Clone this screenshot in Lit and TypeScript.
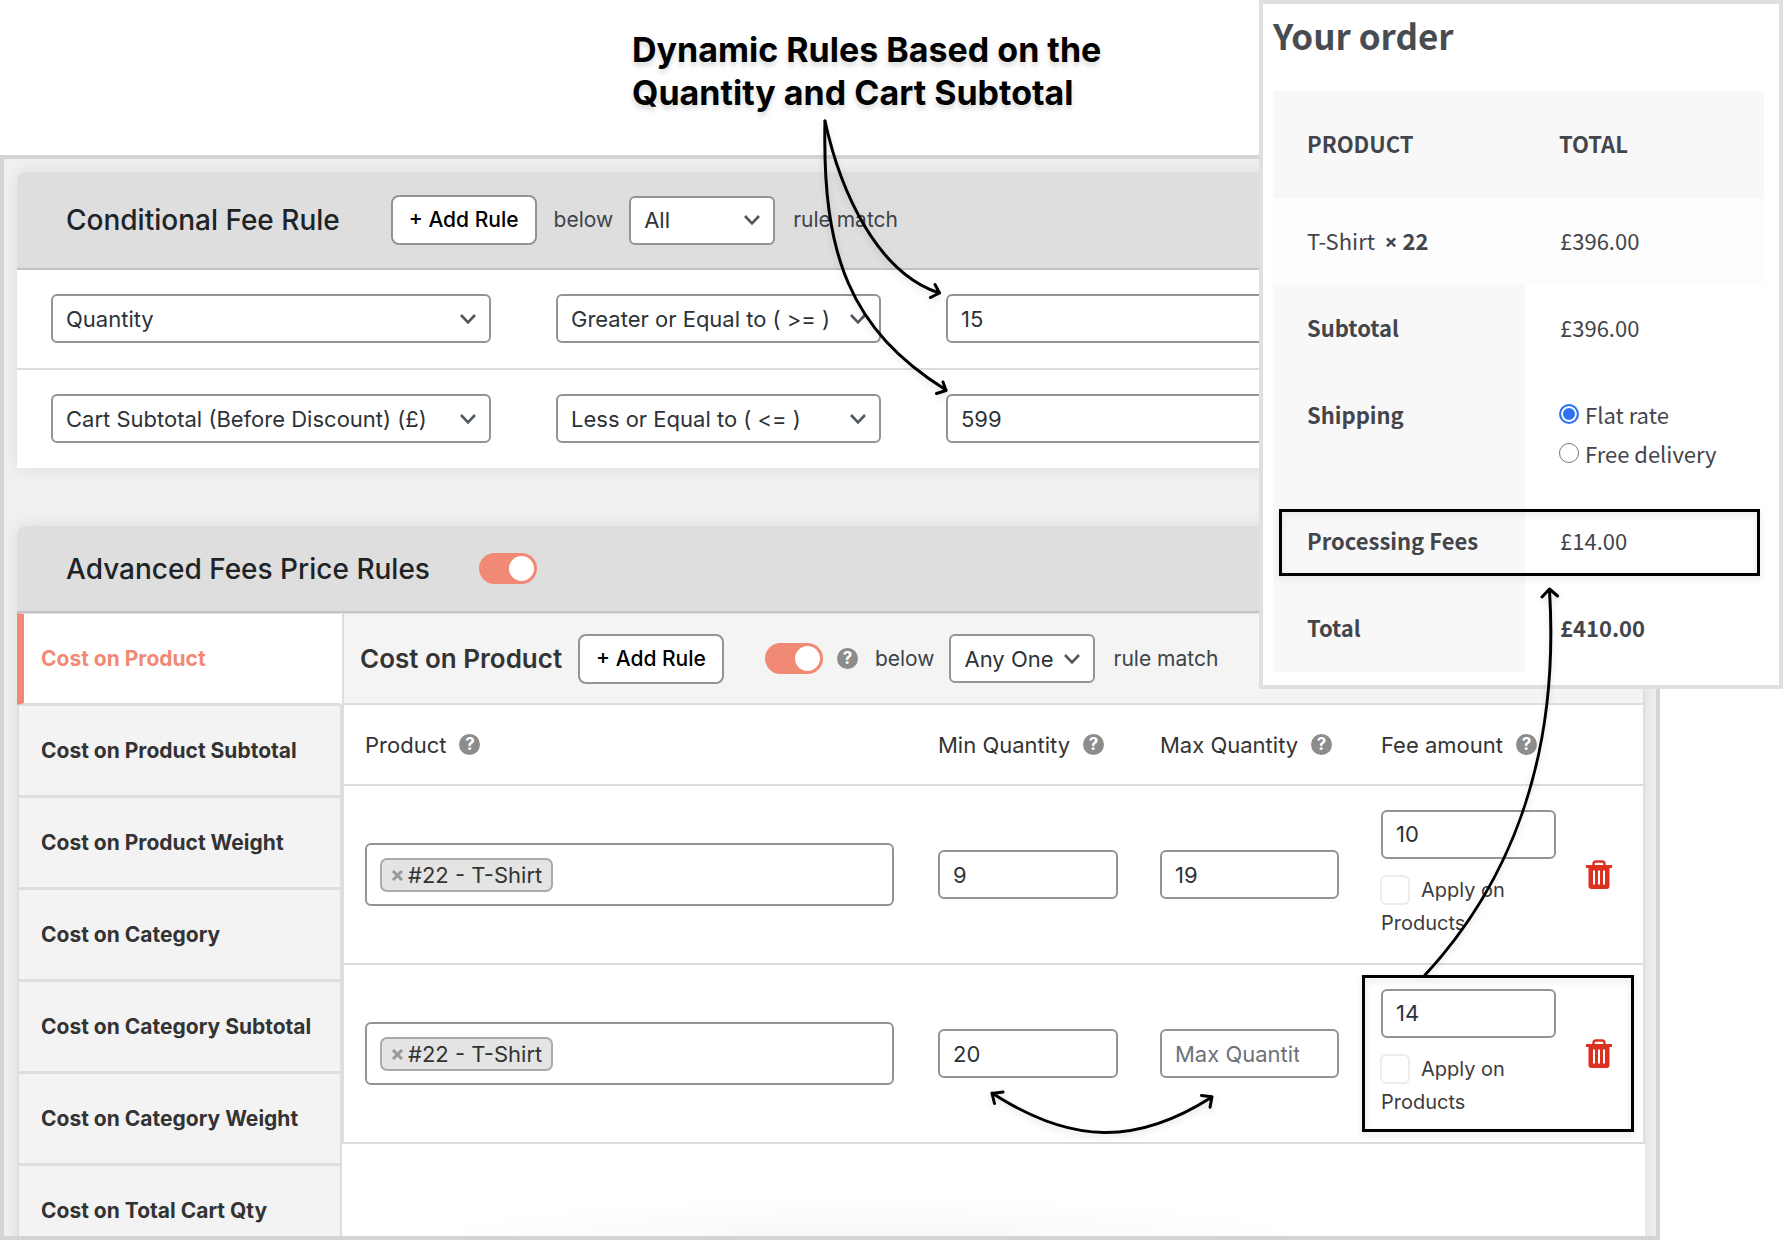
import { LitElement, html, css, svg } from "lit";
import { customElement, property } from "lit/decorators.js";

const chevron = svg`<svg class="chevron" viewBox="0 0 18 12" width="18" height="12" aria-hidden="true"><path d="M2 2l7 7.4L16 2" fill="none" stroke="#50575e" stroke-width="2.6"/></svg>`;

const controls = css`
  *, *::before, *::after { box-sizing: border-box; }
  .select { position: relative; display: inline-flex; align-items: center; }
  .select select { width: 100%; }
  .chevron { position: absolute; right: 14px; pointer-events: none; }
  select, input.field {
    appearance: none; height: 49px; margin: 0; padding: 0 13px; border: 2px solid #929499; border-radius: 6px;
    background: #fff; color: #2c3338; font: 400 22px/30px Inter, "Liberation Sans", sans-serif;
  }
  input.field { width: 100%; }
  input.field::placeholder { color: #6c7177; opacity: 1; }
  .add {
    height: 50px; padding: 0 16px; border: 2px solid #929499; border-radius: 8px; background: #fff; color: #000;
    font: 500 21px/28px Inter, "Liberation Sans", sans-serif; white-space: nowrap;
  }
  .hint { font-size: 21px; line-height: 28px; color: #3c434a; white-space: nowrap; }
  .help {
    display: inline-flex; align-items: center; justify-content: center; width: 21px; height: 21px; border-radius: 50%;
    background: #8c8c8c; color: #fff; font: 700 17px/21px Inter, "Liberation Sans", sans-serif; flex: none;
  }
  .toggle { display: inline-flex; flex: none; }
  .toggle input {
    appearance: none; margin: 0; width: 58px; height: 31px; border-radius: 16px; background: #f08a74;
    display: flex; align-items: center; justify-content: flex-end; padding: 0 3px;
  }
  .toggle input::before { content: ""; width: 25px; height: 25px; border-radius: 50%; background: #fff; }
`;

const pick = (name: string, value: string, cls = "") => html`
  <span class="select ${cls}">
    <select aria-label=${name}><option>${value}</option></select>${chevron}
  </span>`;

const toggle = (name: string) => html`
  <label class="toggle"><input type="checkbox" role="switch" aria-label=${name} checked /></label>`;

const help = html`<span class="help">?</span>`;

@customElement("condition-card")
class ConditionCard extends LitElement {
  static styles = [controls, css`
    :host { display: block; background: #fff; border-radius: 8px 8px 0 0; box-shadow: 0 0 18px rgba(0, 0, 0, 0.08); }
    .head {
      display: flex; align-items: center; height: 98px; padding: 0 49px; border-bottom: 2px solid #c0c1c4;
      border-radius: 8px 8px 0 0; background: #dedede;
    }
    h2 { margin: 0 51px 0 0; font-size: 28px; line-height: 36px; font-weight: 500; color: #1d2327; white-space: nowrap; }
    .head .select { width: 146px; margin: 0 18px 0 16px; }
    .add { margin-right: 17px; }
    .row {
      display: grid; grid-template-columns: 440px 325px 1fr; column-gap: 65px; padding: 24px 34px 25px;
      border-bottom: 2px solid #dcdcde;
    }
    .row:last-child { border-bottom: 0; }
  `];

  @property({ attribute: false }) rules = [
    { field: "Quantity", op: "Greater or Equal to ( >= )", value: "15" },
    { field: "Cart Subtotal (Before Discount) (£)", op: "Less or Equal to ( <= )", value: "599" },
  ];

  render() {
    return html`
      <header class="head">
        <h2>Conditional Fee Rule</h2>
        <button class="add" type="button">+ Add Rule</button>
        <span class="hint">below</span>
        ${pick("Rule match mode", "All")}
        <span class="hint">rule match</span>
      </header>
      ${this.rules.map((r) => html`
        <div class="row">
          ${pick("Condition", r.field)}
          ${pick("Operator", r.op)}
          <input class="field" type="text" aria-label="Value" .value=${r.value} />
        </div>`)}
    `;
  }
}

@customElement("price-rules-card")
class PriceRulesCard extends LitElement {
  static styles = [controls, css`
    :host { display: block; background: #fff; border-radius: 8px 8px 0 0; box-shadow: 0 0 18px rgba(0, 0, 0, 0.08); }
    .head {
      display: flex; align-items: center; height: 87px; padding: 0 49px; border-bottom: 2px solid #c3c4c7;
      border-radius: 8px 8px 0 0; background: #dedede;
    }
    h2 { margin: 0 49px 0 0; font-size: 28px; line-height: 36px; font-weight: 500; color: #1d2327; white-space: nowrap; }
    .body { display: grid; grid-template-columns: 325px 1fr; align-items: start; }
    .tab {
      display: flex; align-items: center; height: 92px; padding-left: 22px; border: 2px solid #dedede; border-top-width: 1px;
      background: #f3f3f3; color: #333; font-size: 21px; line-height: 28px; font-weight: 700; text-decoration: none; white-space: nowrap;
    }
    .tab.on { padding-left: 17px; border-left: 7px solid #f08a74; border-right-color: #fff; background: #fff; color: #f08a74; }
    .bar {
      display: flex; align-items: center; height: 92px; padding-left: 16px; background: #f4f4f4;
      border: 2px solid #dedede; border-top-width: 1px;
    }
    h3 { margin: 0 16px 0 0; font-size: 26px; line-height: 32px; font-weight: 600; color: #333; white-space: nowrap; }
    .bar .add { margin-right: 41px; }
    .bar .help { margin: 0 17px 0 14px; }
    .bar .select { width: 146px; margin: 0 18px 0 15px; }
    table { width: 100%; border-collapse: separate; border-spacing: 0; table-layout: fixed; border-left: 2px solid #dedede; border-right: 2px solid #dedede; }
    .c-min { width: 222px; } .c-max { width: 221px; } .c-fee { width: 217px; } .c-del { width: 66px; }
    th, td { padding: 0 21px; border-bottom: 2px solid #dcdcdc; text-align: left; vertical-align: middle; }
    td:first-child { padding-right: 23px; }
    th { height: 81px; font-size: 22px; line-height: 30px; font-weight: 400; color: #333; }
    th div { display: flex; align-items: center; gap: 13px; white-space: nowrap; }
    td { height: 179px; }
    td:last-child, th:last-child { padding: 0 9px; }
    td .field { padding-right: 38px; }
    .picker { display: flex; align-items: center; height: 63px; padding: 0 13px; border: 2px solid #929499; border-radius: 6px; }
    .tag {
      display: flex; align-items: center; gap: 4px; height: 34px; padding: 0 9px; border: 2px solid #aaa; border-radius: 7px;
      background: #e4e4e4; color: #333; font-size: 22px; line-height: 30px; white-space: nowrap;
    }
    .x { padding: 2px 0 0; border: 0; background: none; display: flex; }
    .apply { display: block; margin-top: 16px; font-size: 20px; line-height: 31px; color: #3c3c3c; }
    .apply input { appearance: none; width: 30px; height: 30px; margin: 0 11px 3px -1px; border: 2px solid #ececec; border-radius: 6px; background: #fff; vertical-align: middle; }
    .trash { display: block; padding: 0; border: 0; background: none; }
    .trash svg { display: block; }
  `];

  tabs = ["Cost on Product", "Cost on Product Subtotal", "Cost on Product Weight", "Cost on Category",
    "Cost on Category Subtotal", "Cost on Category Weight", "Cost on Total Cart Qty"];

  rows = [
    { product: "#22 - T-Shirt", min: "9", max: "19", fee: "10" },
    { product: "#22 - T-Shirt", min: "20", max: "", fee: "14" },
  ];

  render() {
    return html`
      <header class="head"><h2>Advanced Fees Price Rules</h2>${toggle("Enable advanced price rules")}</header>
      <div class="body">
        <nav>${this.tabs.map((t, i) => html`<a class="tab ${i === 0 ? "on" : ""}" href="#">${t}</a>`)}</nav>
        <section>
          <div class="bar">
            <h3>Cost on Product</h3>
            <button class="add" type="button">+ Add Rule</button>
            ${toggle("Enable cost on product")}${help}
            <span class="hint">below</span>
            ${pick("Rule match mode", "Any One")}
            <span class="hint">rule match</span>
          </div>
          <table>
            <colgroup><col /><col class="c-min" /><col class="c-max" /><col class="c-fee" /><col class="c-del" /></colgroup>
            <thead><tr>
              ${["Product", "Min Quantity", "Max Quantity", "Fee amount"].map((h) => html`<th scope="col"><div>${h}${help}</div></th>`)}
              <th></th>
            </tr></thead>
            <tbody>${this.rows.map((r) => html`<tr>
              <td><div class="picker"><span class="tag">
                <button class="x" type="button" aria-label="Remove">
                  <svg width="13" height="13" viewBox="0 0 13 13"><path d="M2 2l9 9M11 2l-9 9" stroke="#999" stroke-width="3"/></svg>
                </button>${r.product}</span></div></td>
              <td><input class="field" type="text" aria-label="Min Quantity" placeholder="Min Quantity" .value=${r.min} /></td>
              <td><input class="field" type="text" aria-label="Max Quantity" placeholder="Max Quantity" .value=${r.max} /></td>
              <td><input class="field" type="text" aria-label="Fee amount" .value=${r.fee} />
                <label class="apply"><input type="checkbox" />Apply on Products</label></td>
              <td><button class="trash" type="button" aria-label="Delete rule">
                <svg width="26" height="29" viewBox="0 0 26 29">
                  <path d="M0 5h26v3H0z" fill="#dc3020"/>
                  <path d="M7.5 5.5V4q0-2.5 2.5-2.5h6q2.500 0 2.500 2.500v1.500" fill="none" stroke="#dc3020" stroke-width="2.400"/>
                  <path d="M2.500 7h21v19q0 3-3 3h-15q-3 0-3-3z" fill="#dc3020"/>
                  <path d="M8 10.500v14M13 10.500v14M18 10.500v14" stroke="#fff" stroke-width="2"/>
                </svg></button></td>
            </tr>`)}</tbody>
          </table>
        </section>
      </div>
    `;
  }
}

@customElement("order-card")
class OrderCard extends LitElement {
  static styles = css`
    * { box-sizing: border-box; }
    :host {
      display: block; box-sizing: border-box; padding: 6px 15px 13px 10px; border: 4px solid #e0e0e0; background: #fff;
      font-family: "Noto Sans CJK SC", "Open Sans", sans-serif; color: #43454b;
    }
    h1 { margin: 0 0 31px; font-size: 35px; line-height: 50px; font-weight: 700; color: #484c51; }
    table { width: 100%; border-collapse: collapse; table-layout: fixed; font-size: 22px; line-height: 39px; }
    .c-name { width: 252px; }
    th, td { padding: 23px 34px 25px 35px; text-align: left; vertical-align: top; font-weight: 400; }
    th { font-weight: 700; background: #f8f8f8; }
    th, .item td:first-child { padding-left: 34px; }
    thead th { padding-top: 33px; padding-bottom: 35px; }
    .item td { background: #fdfdfd; }
    .times { font-family: "Open Sans", sans-serif; line-height: 1; }
    .sum { font-weight: 700; }
    .opt { display: flex; align-items: center; gap: 6px; margin-left: -1px; white-space: nowrap; }
    .opt input { appearance: none; width: 20px; height: 20px; margin: 0 0 2px; border: 1px solid #767676; border-radius: 50%; background: #fff; flex: none; }
    .opt input:checked { border: 2px solid #2f72f6; background: #2f72f6; box-shadow: inset 0 0 0 2px #fff; }
  `;

  render() {
    return html`
      <h1>Your order</h1>
      <table>
        <colgroup><col class="c-name" /><col /></colgroup>
        <thead><tr><th scope="col">PRODUCT</th><th scope="col">TOTAL</th></tr></thead>
        <tbody>
          <tr class="item"><td>T-Shirt&nbsp; <b><span class="times">×</span> 22</b></td><td>£396.00</td></tr>
          <tr><th scope="row">Subtotal</th><td>£396.00</td></tr>
          <tr><th scope="row">Shipping</th><td>
            <label class="opt"><input type="radio" name="ship" checked />Flat rate</label>
            <label class="opt"><input type="radio" name="ship" />Free delivery</label></td></tr>
          <tr><th scope="row">Processing Fees</th><td>£14.00</td></tr>
          <tr><th scope="row">Total</th><td class="sum">£410.00</td></tr>
        </tbody>
      </table>
    `;
  }
}

@customElement("app-root")
class AppRoot extends LitElement {
  static styles = css`
    :host { display: block; font-family: Inter, "Liberation Sans", sans-serif; }
    .page { position: relative; display: flex; flex-direction: column; height: 100vh; overflow: hidden; background: #fff; }
    .callout {
      margin: 0; height: 155px; padding: 28px 0 0 632px; box-sizing: border-box; color: #000;
      font-size: 34px; line-height: 43px; font-weight: 700; text-shadow: 0 4px 5px rgba(0, 0, 0, 0.15);
    }
    .panel {
      position: relative; flex: 1; min-height: 0; overflow: hidden; box-sizing: border-box; margin-right: 123px; padding: 13px 11px 0 13px;
      border: 4px solid #d4d4d4; background: #f0f0f1;
    }
    .panel::after {
      content: ""; position: absolute; left: 25%; right: 20%; bottom: 0; height: 40px; pointer-events: none;
      background: radial-gradient(ellipse at 50% 100%, rgba(0, 0, 0, 0.03), rgba(0, 0, 0, 0) 70%);
    }
    price-rules-card { margin-top: 58px; }
    order-card { position: absolute; top: 0; right: 0; width: 524px; }
    .marks { position: absolute; top: 0; left: 0; pointer-events: none; filter: drop-shadow(0 3px 3px rgba(0, 0, 0, 0.12)); }
  `;

  render() {
    return html`
      <main class="page">
        <p class="callout">Dynamic Rules Based on the<br />Quantity and Cart Subtotal</p>
        <div class="panel">
          <condition-card></condition-card>
          <price-rules-card></price-rules-card>
        </div>
        <order-card></order-card>
        <svg class="marks" width="1783" height="1240" viewBox="0 0 1783 1240" fill="none" stroke="#000" stroke-width="3"
          stroke-linecap="round" stroke-linejoin="round" aria-hidden="true">
          <path d="M825 121C840 190 876 272 939 293M935 284.500l4.500 8.500-9 4.500"/>
          <path d="M825 121C822 255 850 330 946 390M943 382l3 8.500-9.500 3"/>
          <path d="M1425 975C1508 885 1560 760 1549.500 590M1542 597l7.500-8 8 7"/>
          <path d="M992 1093C1072 1145 1137 1145 1212 1097M1003 1092l-11 1.500 2.500 10M1201.500 1095.500l10.500 1.200-2 10.500"/>
          <path d="M1280.500 510.500h478v64h-478zM1363.500 976.500h269v154h-269z" stroke-linejoin="miter"/>
        </svg>
      </main>
    `;
  }
}
